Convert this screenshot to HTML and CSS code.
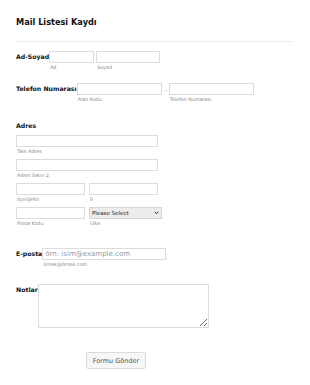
FILE: index.html
```html
<!DOCTYPE html>
<html lang="tr">
<head>
  <meta charset="UTF-8" />
  <title>Mail Listesi Kaydı</title>
  <link rel="stylesheet" href="styles.css">
</head>
<body>
  <form class="form">
    <h1 class="title">Mail Listesi Kaydı</h1>
    <div class="divider"></div>

    <!-- Ad-Soyad -->
    <div class="row row-name">
      <label class="label">Ad-Soyad</label>
      <div class="field">
        <input type="text" class="in w45" />
        <span class="sub">Ad</span>
      </div>
      <div class="field">
        <input type="text" class="in w64" />
        <span class="sub">Soyad</span>
      </div>
    </div>

    <!-- Telefon -->
    <div class="row row-phone">
      <label class="label">Telefon Numarası</label>
      <div class="field">
        <input type="tel" class="in w85" />
        <span class="sub">Alan Kodu</span>
      </div>
      <span class="dash">-</span>
      <div class="field">
        <input type="tel" class="in w85" />
        <span class="sub">Telefon Numarası</span>
      </div>
    </div>

    <!-- Adres -->
    <div class="address">
      <label class="label">Adres</label>
      <div class="field">
        <input type="text" class="in w142" />
        <span class="sub">Tam Adres</span>
      </div>
      <div class="field">
        <input type="text" class="in w142" />
        <span class="sub">Adres Satırı 2</span>
      </div>
      <div class="pair">
        <div class="field">
          <input type="text" class="in w69" />
          <span class="sub">İlçe/Şehir</span>
        </div>
        <div class="field">
          <input type="text" class="in w69" />
          <span class="sub">İl</span>
        </div>
      </div>
      <div class="pair">
        <div class="field">
          <input type="text" class="in w69" />
          <span class="sub">Posta Kodu</span>
        </div>
        <div class="field">
          <div class="select-wrap">
            <select class="select">
              <option>Please Select</option>
            </select>
            <svg class="chev" width="5" height="4" viewBox="0 0 5 4"><path d="M0.7 0.8 L2.5 2.7 L4.3 0.8" fill="none" stroke="#222" stroke-width="1"/></svg>
          </div>
          <span class="sub">Ülke</span>
        </div>
      </div>
    </div>

    <!-- E-posta -->
    <div class="row row-mail">
      <label class="label">E-posta</label>
      <div class="field">
        <input type="email" class="in w124 ph" placeholder="örn: isim@example.com" />
        <span class="sub">örnek@örnek.com</span>
      </div>
    </div>

    <!-- Notlar -->
    <div class="row row-notes">
      <label class="label">Notlar</label>
      <textarea class="notes"></textarea>
    </div>

    <div class="actions">
      <button type="button" class="submit">Formu Gönder</button>
    </div>
  </form>
</body>
</html>
```

FILE: styles.css
```css
body {
  margin: 0;
  font-family: 'DejaVu Sans', Verdana, sans-serif;
  background: #fff;
  color: #111;
}

.form {
  padding: 17px 16px 0 16px;
}

.title {
  font-size: 8.2px;
  font-weight: bold;
  margin: 0;
  line-height: 11px;
  color: #111;
}

.divider {
  width: 277px;
  border-top: 1px solid #eeeeee;
  margin-top: 13px;
}

.label {
  font-size: 6.2px;
  font-weight: bold;
  line-height: 9px;
  color: #111;
  white-space: nowrap;
}

.row {
  display: flex;
  align-items: flex-start;
}

.row .label {
  padding-top: 1px;
}

.row-name { margin-top: 9px; }
.row-phone { margin-top: 12px; }
.row-mail { margin-top: 17px; }
.row-notes { margin-top: 16px; }

.field {
  display: flex;
  flex-direction: column;
  margin-right: 2px;
}

.in {
  box-sizing: border-box;
  display: block;
  height: 12px;
  border: 1px solid #dcdcdc;
  border-radius: 0;
  padding: 0 2px;
  margin: 0;
  font-family: inherit;
  font-size: 7px;
  background: #fff;
}

.ph::placeholder {
  color: #9a9a9a;
}

.w45 { width: 45px; }
.w64 { width: 64px; }
.w85 { width: 85px; }
.w69 { width: 69px; }
.w124 { width: 124px; }
.w142 { width: 142px; }

.sub {
  font-size: 4.8px;
  line-height: 6px;
  color: #888;
  margin-top: 2px;
  padding-left: 1px;
}

.dash {
  font-size: 6px;
  color: #888;
  padding: 3px 2px 0 1px;
}

.address {
  margin-top: 18px;
}

.address .label {
  display: block;
  margin-bottom: 5px;
}

.address .field {
  margin-bottom: 4px;
  margin-right: 0;
}

.pair {
  display: flex;
  gap: 4px;
}

.select-wrap {
  position: relative;
  width: 73px;
  height: 12px;
}

.select {
  appearance: none;
  -webkit-appearance: none;
  display: block;
  box-sizing: border-box;
  width: 73px;
  height: 12px;
  margin: 0;
  padding: 0 2px;
  border: 1px solid #d5d5d5;
  border-radius: 0;
  background: #ececec;
  color: #222;
  font-family: inherit;
  font-size: 5.5px;
}

.chev {
  position: absolute;
  right: 3px;
  top: 4px;
  pointer-events: none;
}

.notes {
  box-sizing: border-box;
  display: block;
  width: 171px;
  height: 44px;
  margin: 0;
  border: 1px solid #dcdcdc;
  resize: both;
}

.actions {
  padding-left: 70px;
  margin-top: 24px;
}

.submit {
  display: block;
  width: 60px;
  height: 17px;
  padding: 0;
  border: 1px solid #dcdcdc;
  border-radius: 2px;
  background: #f6f6f6;
  color: #555;
  font-family: inherit;
  font-size: 6.5px;
}
```
